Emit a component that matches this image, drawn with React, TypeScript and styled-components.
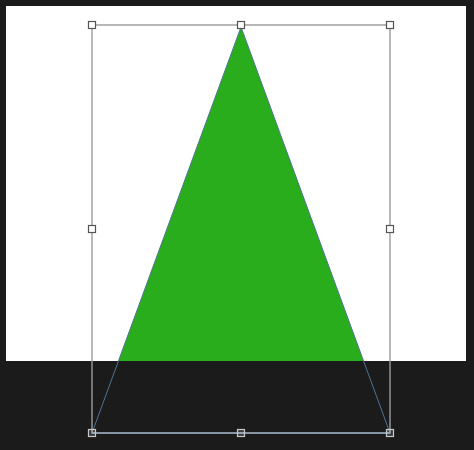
import styled, { createGlobalStyle } from "styled-components"

const Global = createGlobalStyle`
    html, body {
        margin: 0;
        padding: 0;
        background: #1b1b1b;
        font-family: "Liberation Sans", Arial, sans-serif;
    }
`

const Stage = styled.div`
    position: relative;
    width: 474px;
    height: 450px;
    background: #1b1b1b;
    overflow: hidden;
    padding: 6px 8px 0 6px;
    box-sizing: border-box;
`

const Artboard = styled.div`
    width: 460px;
    height: 355px;
    background: #ffffff;
`

const Overlay = styled.svg`
    position: absolute;
    left: 0;
    top: 0;
    width: 474px;
    height: 450px;
`

const handles: [number, number][] = [
    [92, 25], [241, 25], [390, 25],
    [92, 229], [390, 229],
    [92, 433], [241, 433], [390, 433],
]

const App = () => {
    return (
        <>
            <Global />
            <Stage>
                <Artboard />
                <Overlay viewBox="0 0 474 450">
                    <defs>
                        <clipPath id="board">
                            <rect x="6" y="6" width="460" height="355" />
                        </clipPath>
                    </defs>
                    <polygon points="241,27 92,433 390,433" fill="#2aad1c" clipPath="url(#board)" />
                    <polyline points="92,433 241,27 390,433" fill="none" stroke="#4f7394" strokeWidth="1" />
                    <rect x="92" y="25" width="298" height="408" fill="none" stroke="#9a9a9a" strokeWidth="1.4" />
                    <line x1="92" y1="433" x2="390" y2="433" stroke="#8ea2b4" strokeWidth="1.6" />
                    {handles.map(([x, y]) => (
                        <rect key={`${x}-${y}`} x={x - 3.5} y={y - 3.5} width="7" height="7"
                            fill="#ffffff" fillOpacity={y > 361 ? 0.15 : 1} stroke={y > 361 ? "#c8c8c8" : "#555"} strokeWidth="1.2" />
                    ))}
                </Overlay>
            </Stage>
        </>
    )
}

export default App
